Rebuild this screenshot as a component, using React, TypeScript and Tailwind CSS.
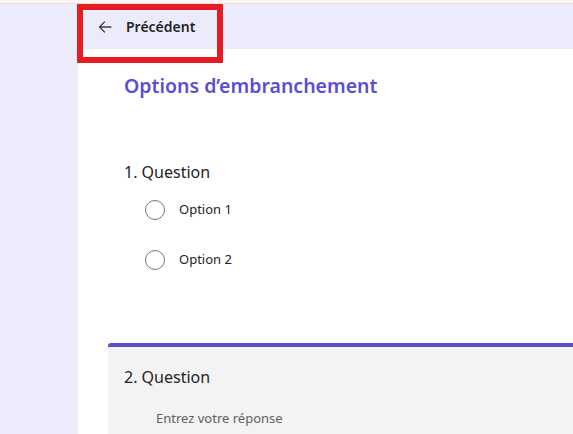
import React from 'react';

const Radio: React.FC<{ label: string }> = ({ label }) => (
  <div className="flex items-center h-[20px]">
    <span className="w-[20px] h-[20px] rounded-full border-[1.5px] border-[#767676] bg-white" />
    <span className="ml-[14px] text-[13px] text-[#242424]">{label}</span>
  </div>
);

const App: React.FC = () => {
  return (
    <div
      className="relative w-[573px] h-[434px] overflow-hidden bg-[#ebebfc]"
      style={{ fontFamily: '"Noto Sans", "Open Sans", sans-serif' }}
    >
      {/* top strip */}
      <div className="h-[4px] bg-[#fdf4ef] border-b border-[#eadfe6]" />

      <div className="flex h-[430px]">
        {/* sidebar */}
        <div className="w-[78px] shrink-0" />

        <div className="flex-1 flex flex-col">
          {/* header bar */}
          <div className="h-[45px] flex items-center pl-[19px] shrink-0">
            <svg width="16" height="16" viewBox="0 0 16 16" className="text-[#424242]">
              <path d="M14 8H2.5M7.5 3L2.5 8l5 5" fill="none" stroke="currentColor" strokeWidth="1.3" strokeLinecap="round" strokeLinejoin="round" />
            </svg>
            <span className="ml-[13px] text-[14px] font-semibold text-[#242424]">Précédent</span>
          </div>

          {/* main panel */}
          <div className="flex-1 bg-white flex flex-col">
            <div className="pl-[46px] pt-[23px]">
              <h1 className="text-[19.5px] leading-[28px] font-semibold text-[#5b4fd1]">Options d’embranchement</h1>
            </div>

            <div className="pl-[46px] pt-[61px]">
              <div className="text-[16px] leading-[22px] text-[#242424]">1. Question</div>
              <div className="pl-[21px] pt-[17px] flex flex-col gap-[30px]">
                <Radio label="Option 1" />
                <Radio label="Option 2" />
              </div>
            </div>

            <div className="mt-[73px] ml-[30px] flex-1 bg-[#f3f3f3] border-t-[4px] border-[#5b4fd1] rounded-tl-[3px]">
              <div className="pl-[16px] pt-[19px] text-[16px] leading-[22px] text-[#242424]">2. Question</div>
              <div className="pl-[48px] pt-[21px] text-[13px] text-[#616161]">Entrez votre réponse</div>
            </div>
          </div>
        </div>
      </div>

      {/* annotation highlight */}
      <div className="absolute left-[77px] top-[4px] w-[146px] h-[59px] border-[6px] border-[#e51d23]" />
    </div>
  );
};

export default App;
